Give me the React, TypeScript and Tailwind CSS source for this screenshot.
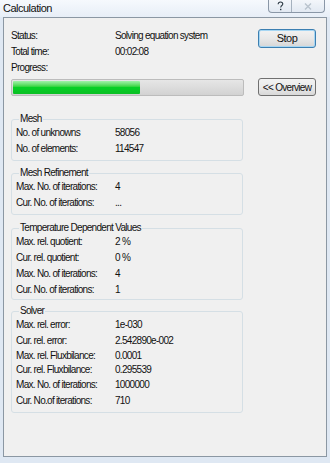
import React from "react";

const font = { fontFamily: '"Liberation Sans", Arial, sans-serif' };

function Row({ label, value, h = 16, lw = 99 }: { label: string; value: string; h?: number; lw?: number }) {
  return (
    <div className="flex items-center" style={{ height: h }}>
      <div className="shrink-0" style={{ width: lw }}>{label}</div>
      <div>{value}</div>
    </div>
  );
}

function Group({ title, children, pb = 4 }: { title: string; children: React.ReactNode; pb?: number }) {
  return (
    <fieldset
      className="w-[232px] border border-[#d5dfe5] rounded-[3px] pl-[4px] pt-0"
      style={{ paddingBottom: pb }}
    >
      <legend className="ml-[3px] px-[1px] leading-[10px]">{title}</legend>
      {children}
    </fieldset>
  );
}

export default function App() {
  return (
    <div
      className="w-[330px] h-[463px] bg-[#dfe8f3] relative overflow-hidden text-[10px] tracking-[-0.7px] text-[#111]"
      style={font}
    >
      {/* title bar */}
      <div className="h-[17px] flex items-center pl-[3px] bg-gradient-to-b from-[#f6f9fd] to-[#e7eef7] text-[11px] tracking-[-0.5px]">
        Calculation
      </div>
      {/* caption buttons */}
      <div className="absolute top-0 right-[5px] w-[57px] h-[13px] flex border border-t-0 border-[#8a97a7] rounded-b-[4px] bg-gradient-to-b from-[#f3f6fa] to-[#e2e9f2] overflow-hidden">
        <div className="w-[23px] flex items-center justify-center border-r border-[#a5b1be]">
          <svg width="7" height="10" viewBox="0 0 7 10">
            <path
              d="M1.2 3.2C1.2 1.8 2.2 1 3.5 1S5.8 1.8 5.8 3.1C5.8 4.3 4.6 4.7 4.1 5.3 3.8 5.6 3.7 6 3.7 6.6"
              fill="none"
              stroke="#2d3a44"
              strokeWidth="1.1"
            />
            <rect x="3" y="7.8" width="1.4" height="1.4" fill="#2d3a44" />
          </svg>
        </div>
        <div className="flex-1 flex items-center justify-center">
          <svg width="8" height="7" viewBox="0 0 8 7">
            <path d="M1 0.5L7 6.5M7 0.5L1 6.5" stroke="#b9c3cd" strokeWidth="1.4" />
          </svg>
        </div>
      </div>
      {/* body */}
      <div className="mx-[3px] h-[440px] border border-[#8b97a3] bg-[#f0f0f0] pl-[7px] pr-[10px] pt-[9px]">
        <div className="flex">
          <div className="flex-1">
            <Row label="Status:" value="Solving equation system" lw={104} />
            <Row label="Total time:" value="00:02:08" lw={104} />
          </div>
          <button className="mt-[2px] w-[58px] h-[19px] rounded-[3px] border border-[#3c7fb1] bg-gradient-to-b from-[#f2f2f2] via-[#e8e8e8] to-[#d6d6d6] shadow-[inset_0_0_0_1px_#a6d6f3] text-[11px] tracking-[-0.5px]">
            Stop
          </button>
        </div>
        <div className="mt-[3px] leading-[12px]">Progress:</div>
        <div className="flex items-center mt-[4px]">
          <div className="w-[233px] h-[17px] rounded-[2px] border border-[#bcbcbc] bg-gradient-to-b from-[#e6e6e6] to-[#d2d2d2] p-[1px] flex">
            <div className="w-[127px] h-full bg-gradient-to-b from-[#9ff2a8] via-[#06d025] to-[#0bbf25] rounded-[1px]" />
          </div>
          <div className="flex-1" />
          <button className="w-[58px] h-[18px] rounded-[3px] border border-[#707070] bg-gradient-to-b from-[#f2f2f2] via-[#ebebeb] to-[#d8d8d8] whitespace-nowrap">
            &lt;&lt; Overview
          </button>
        </div>

        <div className="mt-[18px] flex flex-col gap-[2px]">
          <Group title="Mesh">
            <Row label="No. of unknowns" value="58056" />
            <Row label="No. of elements:" value="114547" />
          </Group>
          <div className="h-[3px]" />
          <Group title="Mesh Refinement">
            <Row label="Max. No. of iterations:" value="4" />
            <Row label="Cur. No. of iterations:" value="..." />
          </Group>
          <div className="h-[4px]" />
          <Group title="Temperature Dependent Values" pb={2}>
            <Row label="Max. rel. quotient:" value="2 %" />
            <Row label="Cur. rel. quotient:" value="0 %" />
            <Row label="Max. No. of iterations:" value="4" />
            <Row label="Cur. No. of iterations:" value="1" />
          </Group>
          <div className="h-[2px]" />
          <Group title="Solver">
            <Row label="Max. rel. error:" value="1e-030" />
            <Row label="Cur. rel. error:" value="2.542890e-002" />
            <Row label="Max. rel. Fluxbilance:" value="0.0001" h={14} />
            <Row label="Cur. rel. Fluxbilance:" value="0.295539" h={15} />
            <Row label="Max. No. of iterations:" value="1000000" h={15} />
            <Row label="Cur. No.of iterations:" value="710" />
          </Group>
        </div>
      </div>
    </div>
  );
}
